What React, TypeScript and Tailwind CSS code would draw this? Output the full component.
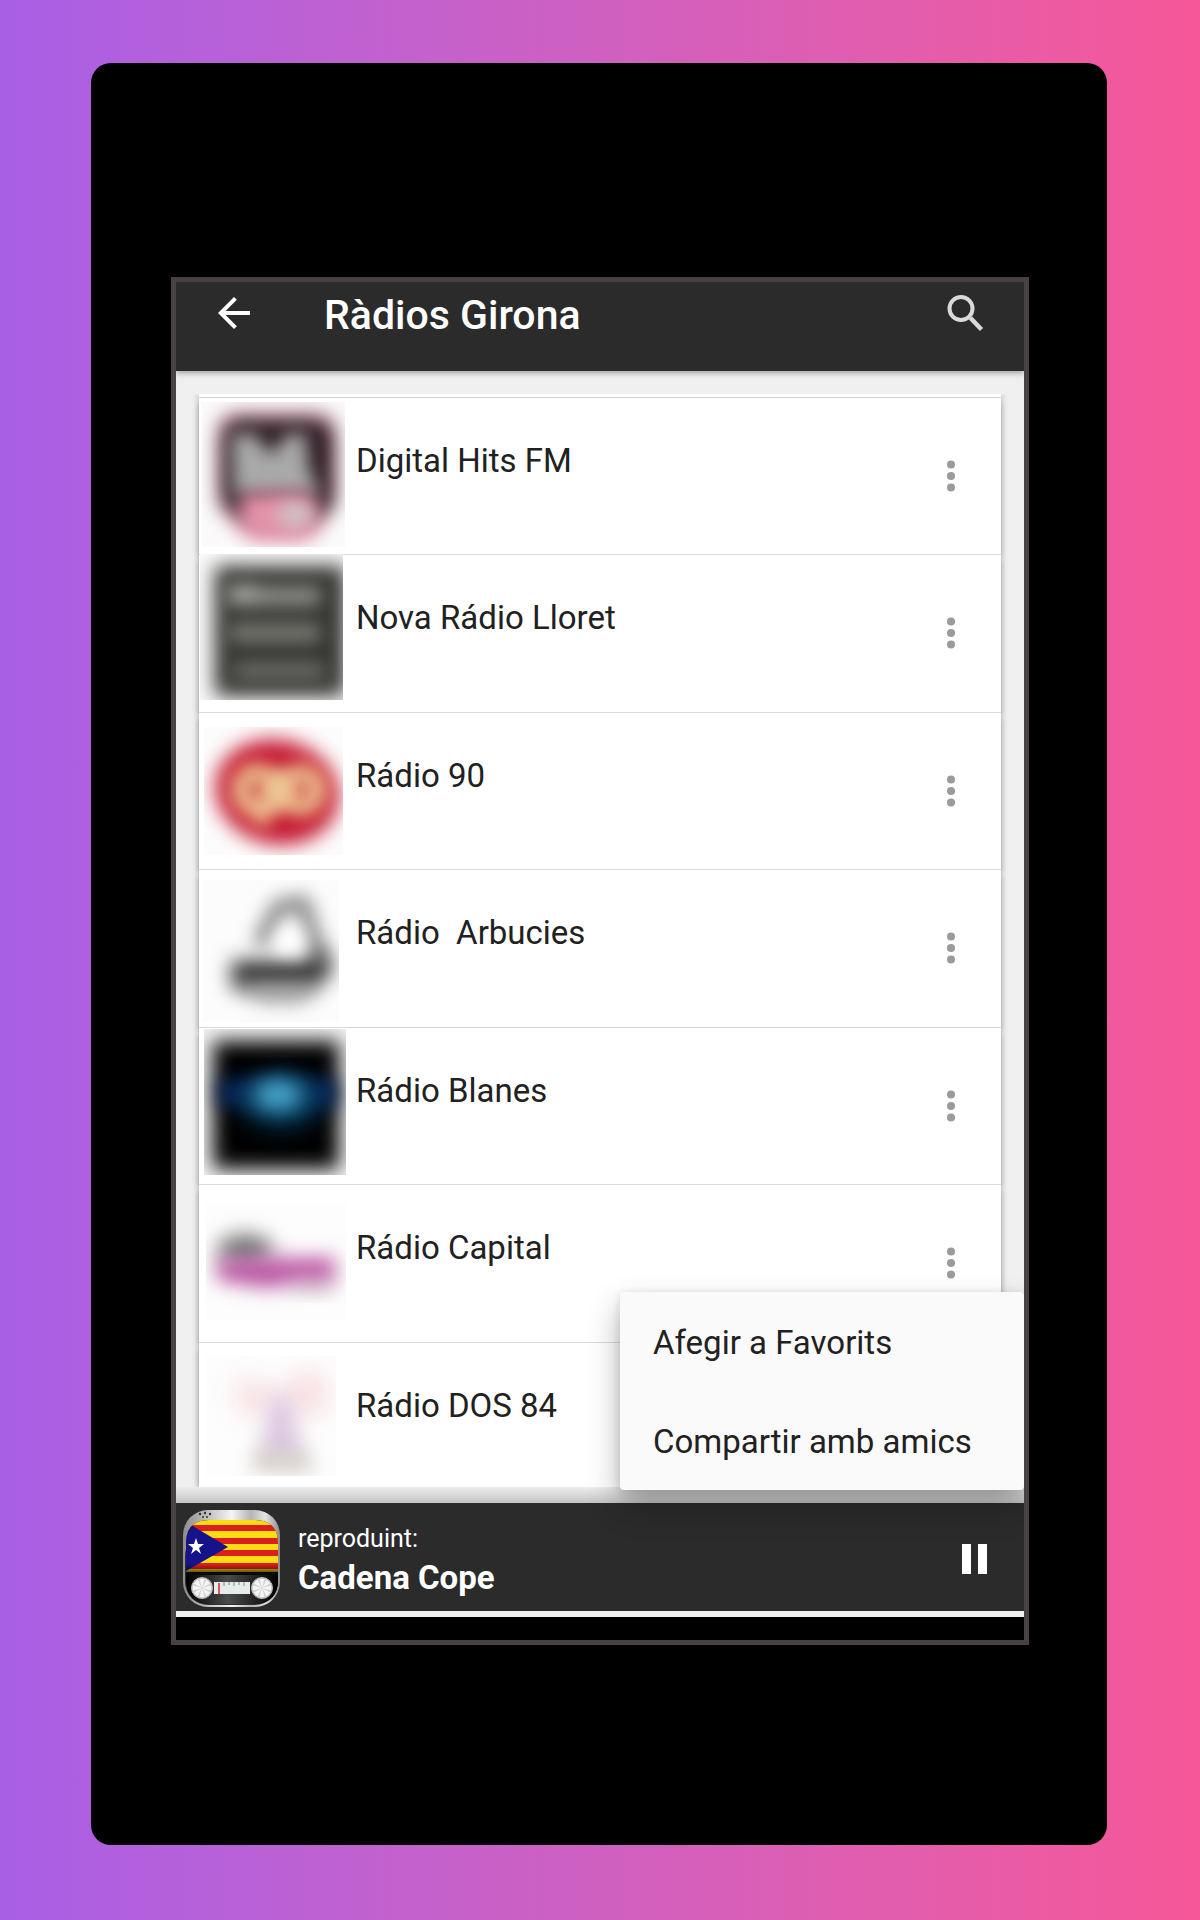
import React, { useState } from "react";

interface Station {
  name: string;
  logo: React.ReactNode;
}

// Blurred station logos, drawn on a 155x157 area
const DigitalLogo = () => (
  <>
    <rect x="3" y="5" width="143" height="145" fill="#fbfafa" />
    <g clipPath="url(#clip-digital)">
      <path d="M38 16H118Q134 16 134 34V104L114 142H48L20 108V34Q20 16 38 16Z" fill="#e6b3c2" filter="url(#blur-md)" />
      <path d="M40 22H116Q134 22 134 42V108L116 122H42L23 106V42Q23 22 40 22Z" fill="#23131a" filter="url(#blur-md)" />
      <path d="M32 36L56 36L72 58L88 36L108 36L110 70L122 98H34Z" fill="#aaaaaa" filter="url(#blur-sm)" />
      <path d="M42 98Q80 92 116 98L120 124L104 142H56L40 124Z" fill="#e592aa" filter="url(#blur-sm)" />
      <ellipse cx="96" cy="118" rx="18" ry="12" fill="#ccc6c7" filter="url(#blur-sm)" />
    </g>
  </>
);

const NovaLogo = () => (
  <>
    <rect x="1" y="0" width="143" height="146" fill="#fafafa" />
    <g clipPath="url(#clip-nova)">
      <rect x="16" y="12" width="130" height="130" rx="4" fill="#31322e" filter="url(#blur-md)" />
      <g filter="url(#blur-sm)">
        <rect x="28" y="32" width="94" height="20" fill="#8e8e8b" />
        <rect x="30" y="30" width="28" height="18" fill="#a8a8a6" />
        <rect x="30" y="70" width="92" height="18" fill="#7f7f7a" />
        <rect x="34" y="108" width="92" height="18" fill="#6e6e69" />
      </g>
    </g>
  </>
);

const NinetyLogo = () => (
  <>
    <rect x="5" y="15" width="139" height="128" fill="#fdfcfc" />
    <g clipPath="url(#clip-ninety)">
      <ellipse cx="78" cy="80" rx="62" ry="52" fill="#c4152f" transform="rotate(14 78 80)" filter="url(#blur-md)" />
      <g fill="none" stroke="#eec793" strokeWidth="18" filter="url(#blur-sm)">
        <ellipse cx="58" cy="78" rx="17" ry="18" />
        <ellipse cx="102" cy="78" rx="17" ry="17" />
        <path d="M74 86Q72 104 58 112" strokeWidth="12" />
      </g>
      <ellipse cx="80" cy="78" rx="12" ry="16" fill="#edc792" filter="url(#blur-sm)" />
    </g>
  </>
);

const ArbuciesLogo = () => (
  <>
    <rect x="3" y="11" width="137" height="142" fill="#fcfcfc" />
    <g clipPath="url(#clip-arbucies)">
      <path d="M60 76L80 38L104 34L122 92" fill="none" stroke="#8a8a8a" strokeWidth="16" strokeLinejoin="round" filter="url(#blur-sm)" />
      <path d="M32 92H110L124 78L134 102L114 120H34Z" fill="#2a2a2a" filter="url(#blur-md)" />
      <path d="M34 114L62 134H104L122 114Z" fill="#9a9a9a" opacity="0.8" filter="url(#blur-md)" />
      <circle cx="90" cy="72" r="13" fill="#fff" filter="url(#blur-sm)" />
    </g>
  </>
);

const BlanesLogo = () => (
  <>
    <rect x="5" y="2" width="142" height="146" fill="#f4f4f4" />
    <g clipPath="url(#clip-blanes)">
      <rect x="14" y="14" width="126" height="128" fill="#000" filter="url(#blur-md)" />
      <rect x="20" y="54" width="118" height="24" fill="#0b2f6c" filter="url(#blur-md)" />
      <ellipse cx="82" cy="74" rx="40" ry="26" fill="#033a5a" filter="url(#blur-lg)" />
      <ellipse cx="79" cy="68" rx="24" ry="15" fill="#4aa9ce" filter="url(#blur-md)" />
    </g>
  </>
);

const CapitalLogo = () => (
  <>
    <rect x="7" y="20" width="140" height="116" fill="#fdfdfd" />
    <g clipPath="url(#clip-capital)">
      <ellipse cx="46" cy="66" rx="28" ry="16" fill="#777777" filter="url(#blur-md)" />
      <path d="M18 76L70 74H136V98H96L70 104L18 96Z" fill="#b9529f" filter="url(#blur-md)" />
      <ellipse cx="112" cy="104" rx="26" ry="5" fill="#9a8a98" opacity="0.5" filter="url(#blur-sm)" />
    </g>
  </>
);

const DosLogo = () => (
  <>
    <rect x="7" y="14" width="130" height="120" fill="#fdfdfd" />
    <g clipPath="url(#clip-dos)">
      <path d="M38 34L82 48L110 24L128 40V70L100 74L82 60L56 74L38 68Z" fill="#f8dfe2" filter="url(#blur-lg)" />
      <path d="M72 56H92L104 118H60Z" fill="#dcc6e0" filter="url(#blur-md)" />
      <path d="M50 128L66 104L82 118L98 104L118 128Z" fill="#cdc8be" filter="url(#blur-md)" />
    </g>
  </>
);

const stations: Station[] = [
  { name: "Digital Hits FM", logo: <DigitalLogo /> },
  { name: "Nova Rádio Lloret", logo: <NovaLogo /> },
  { name: "Rádio 90", logo: <NinetyLogo /> },
  { name: "Rádio  Arbucies", logo: <ArbuciesLogo /> },
  { name: "Rádio Blanes", logo: <BlanesLogo /> },
  { name: "Rádio Capital", logo: <CapitalLogo /> },
  { name: "Rádio DOS 84", logo: <DosLogo /> },
];

function LogoDefs() {
  return (
    <svg className="absolute h-0 w-0" aria-hidden="true">
      <defs>
        <filter id="blur-sm" x="-60%" y="-100%" width="220%" height="300%" colorInterpolationFilters="sRGB">
          <feGaussianBlur stdDeviation="9" />
        </filter>
        <filter id="blur-md" x="-60%" y="-100%" width="220%" height="300%" colorInterpolationFilters="sRGB">
          <feGaussianBlur stdDeviation="10" />
        </filter>
        <filter id="blur-lg" x="-60%" y="-60%" width="220%" height="220%" colorInterpolationFilters="sRGB">
          <feGaussianBlur stdDeviation="12" />
        </filter>
        <clipPath id="clip-digital"><rect x="3" y="5" width="143" height="145" /></clipPath>
        <clipPath id="clip-nova"><rect x="1" y="0" width="143" height="146" /></clipPath>
        <clipPath id="clip-ninety"><rect x="5" y="15" width="139" height="128" /></clipPath>
        <clipPath id="clip-arbucies"><rect x="3" y="11" width="137" height="142" /></clipPath>
        <clipPath id="clip-blanes"><rect x="5" y="2" width="142" height="146" /></clipPath>
        <clipPath id="clip-capital"><rect x="7" y="20" width="140" height="116" /></clipPath>
        <clipPath id="clip-dos"><rect x="7" y="14" width="130" height="120" /></clipPath>
      </defs>
    </svg>
  );
}

function AppLogo() {
  const spokes = [0, 45, 90, 135];

  return (
    <svg className="size-[98px] shrink-0" viewBox="0 0 98 98" aria-hidden="true">
      <defs>
        <linearGradient id="metal" x1="0" x2="1" y1="0" y2="0">
          <stop offset="0" stopColor="#8c8c8c" />
          <stop offset="0.3" stopColor="#c9c9c9" />
          <stop offset="0.5" stopColor="#f5f5f5" />
          <stop offset="0.7" stopColor="#b4b4b4" />
          <stop offset="0.85" stopColor="#e4e4e4" />
          <stop offset="1" stopColor="#8a8a8a" />
        </linearGradient>
        <linearGradient id="deck" x1="0" x2="1" y1="0" y2="0">
          <stop offset="0" stopColor="#000" />
          <stop offset="0.45" stopColor="#4c4c4c" />
          <stop offset="1" stopColor="#000" />
        </linearGradient>
        <linearGradient id="flag-shade" x1="0" x2="0" y1="0" y2="1">
          <stop offset="0.85" stopColor="#000" stopOpacity="0" />
          <stop offset="1" stopColor="#000" stopOpacity="0.6" />
        </linearGradient>
        <clipPath id="face">
          <path d="M3 34Q3 11 26 11H72Q95 11 95 34V70Q95 95 70 95H28Q3 95 3 70Z" />
        </clipPath>
      </defs>
      <rect x="0" y="1" width="97" height="97" rx="25" fill="url(#metal)" />
      <rect x="2" y="24" width="93" height="72" rx="23" fill="#303030" />
      <g clipPath="url(#face)">
        <rect width="98" height="98" fill="#0a0a0a" />
        <rect x="3" y="11" width="92" height="52" fill="#fddc14" />
        {[16, 29, 41, 54].map((y) => (
          <rect key={y} x="3" y={y} width="92" height="6" fill="#dc1f1c" />
        ))}
        <path d="M3 13L45 38L3 62Z" fill="#16128a" />
        <path d="M13 29L15 35H21L16 39L18 45L13 41L8 45L10 39L5 35H11Z" fill="#fff" />
        <rect x="3" y="11" width="92" height="52" fill="url(#flag-shade)" />
        <rect x="3" y="66" width="92" height="29" fill="url(#deck)" />
      </g>
      <rect x="31" y="73" width="36" height="12" fill="#e6ecec" />
      <path d="M41 73v4M46 73v3M51 73v4M56 73v3M61 73v4" stroke="#7b898f" strokeWidth="1" />
      <path d="M36 74V85" stroke="#d8232a" strokeWidth="1.5" />
      {[19, 79].map((cx) => (
        <g key={cx}>
          <circle cx={cx} cy="79" r="10.5" fill="#d2d2d2" stroke="#b5b5b5" />
          {spokes.map((angle) => (
            <path
              key={angle}
              d={`M${cx} 79L${cx - 2.5} 70H${cx + 2.5}L${cx - 2.5} 88H${cx + 2.5}Z`}
              fill="#f4f4f4"
              transform={`rotate(${angle} ${cx} 79)`}
            />
          ))}
          <circle cx={cx} cy="79" r="2" fill="#e4e4e4" />
        </g>
      ))}
      <g fill="#333">
        <circle cx="17" cy="5" r="1.2" />
        <circle cx="22" cy="4" r="1.2" />
        <circle cx="27" cy="5" r="1.2" />
        <circle cx="20" cy="8" r="1" />
        <circle cx="24" cy="8" r="1" />
      </g>
    </svg>
  );
}

function StationRow({ station, onMenu }: { station: Station; onMenu: () => void }) {
  return (
    <li className="flex h-[157px] items-start border-t border-[#dadada] bg-white shadow-[-4px_5px_5px_-3px_rgba(0,0,0,0.16),4px_5px_5px_-3px_rgba(0,0,0,0.12)] last:h-[145px] even:h-[158px]">
      <svg className="-mt-px mr-0.5 h-[157px] w-[155px] shrink-0" viewBox="0 0 155 157" aria-hidden="true">
        {station.logo}
      </svg>
      <h2 className="grow pt-[43px] text-[33px] leading-[40px] whitespace-pre text-[#212121]">{station.name}</h2>
      <button type="button" aria-label={`Opcions de ${station.name}`} onClick={onMenu} className="mt-[54px] mr-[26px] p-0">
        <svg className="size-12" viewBox="0 0 48 48" fill="#9a9a9a">
          <circle cx="24" cy="12.5" r="4" />
          <circle cx="24" cy="24" r="4" />
          <circle cx="24" cy="35.5" r="4" />
        </svg>
      </button>
    </li>
  );
}

export default function App() {
  const [menuOpen, setMenuOpen] = useState(true);

  return (
    <div className="min-h-screen bg-linear-to-r from-[#a95fe6] to-[#f65798] pt-[63px] pr-[93px] pb-[75px] pl-[91px] font-[Roboto,sans-serif]">
      <LogoDefs />
      <div className="rounded-[20px] bg-black pt-[214px] pr-[78px] pb-[200px] pl-20">
        <div className="border-[5px] border-[#484141]">
          <div className="overflow-hidden">
            {/* Toolbar */}
            <header className="relative z-10 flex items-start bg-[#2b2b2b] pt-[7px] pr-[34px] pb-8 pl-[34px] shadow-[0_2px_6px_rgba(0,0,0,0.35)]">
              <button type="button" aria-label="Enrere">
                <svg className="size-12" viewBox="0 0 24 24" fill="#fff">
                  <path d="M20 11H7.83l5.59-5.59L12 4l-8 8 8 8 1.41-1.41L7.83 13H20v-2z" />
                </svg>
              </button>
              <h1 className="grow pt-0.5 pl-[66px] text-[41px] leading-[48px] font-medium text-white">Ràdios Girona</h1>
              <button type="button" aria-label="Cerca">
                <svg className="size-12" viewBox="0 0 48 48" fill="none" stroke="#dadada">
                  <circle cx="19" cy="19.5" r="11.5" strokeWidth="4" />
                  <path d="M28.5 29L39.5 40.5" strokeWidth="4.5" />
                </svg>
              </button>
            </header>

            {/* Station list */}
            <main className="relative bg-[#f0f0f0] pt-[23px]">
              <div className="overflow-hidden px-[23px]">
                <ul className="bg-white pt-[3px] shadow-[0_0_7px_rgba(0,0,0,0.28)]">
                  {stations.map((station) => (
                    <StationRow key={station.name} station={station} onMenu={() => setMenuOpen(!menuOpen)} />
                  ))}
                </ul>
              </div>
              <div className="h-4 bg-linear-to-b from-[#ededed] to-[#c4c4c4]" />

              {menuOpen && (
                <div
                  role="menu"
                  className="absolute right-0 bottom-[13px] z-20 flex w-[404px] flex-col rounded-[4px] bg-[#fafafa] shadow-[0_16px_32px_rgba(0,0,0,0.3),0_2px_10px_rgba(0,0,0,0.12)]"
                >
                  {["Afegir a Favorits", "Compartir amb amics"].map((label) => (
                    <button
                      key={label}
                      type="button"
                      role="menuitem"
                      className="h-[99px] pt-0.5 pl-[33px] text-left text-[33px] leading-[40px] text-[#212121]"
                    >
                      {label}
                    </button>
                  ))}
                </div>
              )}
            </main>

            {/* Player */}
            <footer className="bg-black pb-[23px]">
              <div className="flex items-center border-b-6 border-[#f1f0f1] bg-[#2b2b2b] pt-[6px] pr-[25px] pb-1 pl-[7px]">
                <AppLogo />
                <div className="grow pt-[3px] pl-[17px] text-white">
                  <p className="text-[25px] leading-[36px]">reproduint:</p>
                  <p className="text-[33px] leading-[42px] font-bold">Cadena Cope</p>
                </div>
                <button type="button" aria-label="Pausa">
                  <svg className="size-12" viewBox="0 0 48 48" fill="#fff">
                    <rect x="11" y="10" width="9" height="30" />
                    <rect x="27" y="10" width="9" height="30" />
                  </svg>
                </button>
              </div>
            </footer>
          </div>
        </div>
      </div>
    </div>
  );
}
